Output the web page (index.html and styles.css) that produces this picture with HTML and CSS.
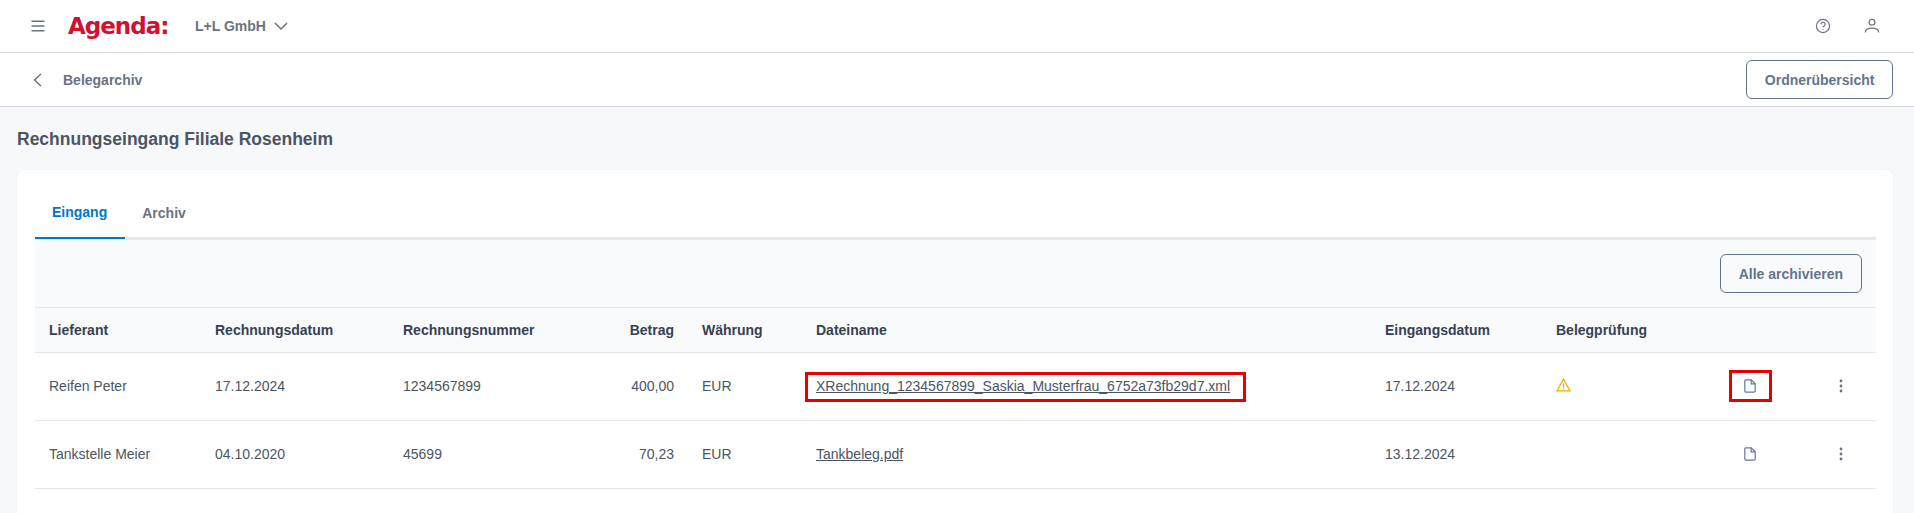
FILE: index.html
```html
<!DOCTYPE html>
<html lang="de">
<head>
<meta charset="utf-8">
<title>Belegarchiv</title>
<link rel="stylesheet" href="styles.css">
</head>
<body>
<header class="topbar">
  <div class="topbar-left">
    <svg class="icon menu" viewBox="0 0 16 16" width="16" height="16"><path d="M1.5 3.2h13M1.5 8h13M1.5 12.8h13"/></svg>
    <span class="logo">Agenda:</span>
    <span class="company">L+L GmbH</span>
    <svg class="icon chevron" viewBox="0 0 14 8" width="14" height="8"><path d="M1 1l6 6 6-6"/></svg>
  </div>
  <div class="topbar-right">
    <svg class="icon" viewBox="0 0 16 16" width="16" height="16"><circle cx="8" cy="8" r="6.6"/><path d="M5.9 6.3a2.1 2 0 1 1 3.2 1.7c-.7.4-1.1.8-1.1 1.6"/><path d="M8 11.2v.9"/></svg>
    <svg class="icon" viewBox="0 0 16 16" width="16" height="16"><circle cx="8" cy="4.3" r="2.9"/><path d="M1.2 14.5c.3-3 3-4.4 6.8-4.4s6.5 1.4 6.8 4.4"/></svg>
  </div>
</header>
<nav class="subbar">
  <div class="subbar-left">
    <svg class="icon back" viewBox="0 0 9 14" width="9" height="14"><path d="M8 1L1.5 7 8 13"/></svg>
    <span class="subbar-title">Belegarchiv</span>
  </div>
  <button class="btn">Ordnerübersicht</button>
</nav>
<main class="content">
  <h1 class="page-title">Rechnungseingang Filiale Rosenheim</h1>
  <section class="card">
    <div class="tabs">
      <span class="tab active">Eingang</span>
      <span class="tab">Archiv</span>
    </div>
    <div class="toolbar"><button class="btn btn-archive">Alle archivieren</button></div>
    <table class="grid">
      <colgroup>
        <col class="c1"><col class="c2"><col class="c3"><col class="c4"><col class="c5"><col class="c6"><col class="c7"><col class="c8"><col class="c9"><col class="c10">
      </colgroup>
      <thead>
        <tr>
          <th>Lieferant</th><th>Rechnungsdatum</th><th>Rechnungsnummer</th><th class="num">Betrag</th><th>Währung</th><th>Dateiname</th><th>Eingangsdatum</th><th>Belegprüfung</th><th></th><th></th>
        </tr>
      </thead>
      <tbody>
        <tr>
          <td>Reifen Peter</td><td>17.12.2024</td><td>1234567899</td><td class="num">400,00</td><td>EUR</td>
          <td class="marked"><a class="file" href="#">XRechnung_1234567899_Saskia_Musterfrau_6752a73fb29d7.xml</a><span class="mark mark-file"></span></td>
          <td>17.12.2024</td>
          <td><svg class="warn" viewBox="0 0 16 15" width="15" height="14"><path d="M8 1.2L1 13.8h14z"/><path d="M8 5.6v4.6M8 11.2v1.2"/></svg></td>
          <td class="center marked"><svg class="icon doc" viewBox="0 0 12 14" width="12" height="14"><path d="M1.8.8h5.4l4 4v7a1.4 1.4 0 0 1-1.4 1.4H1.8A1.4 1.4 0 0 1 .8 11.8V2a1.2 1.2 0 0 1 1-1.2z"/><path d="M7.2.8v4h4"/></svg><span class="mark mark-doc"></span></td>
          <td class="center"><svg class="dots" viewBox="0 0 4 14" width="4" height="14"><circle cx="2" cy="2" r="1.4"/><circle cx="2" cy="7" r="1.4"/><circle cx="2" cy="12" r="1.4"/></svg></td>
        </tr>
        <tr>
          <td>Tankstelle Meier</td><td>04.10.2020</td><td>45699</td><td class="num">70,23</td><td>EUR</td>
          <td><a class="file" href="#">Tankbeleg.pdf</a></td>
          <td>13.12.2024</td>
          <td></td>
          <td class="center"><svg class="icon doc" viewBox="0 0 12 14" width="12" height="14"><path d="M1.8.8h5.4l4 4v7a1.4 1.4 0 0 1-1.4 1.4H1.8A1.4 1.4 0 0 1 .8 11.8V2a1.2 1.2 0 0 1 1-1.2z"/><path d="M7.2.8v4h4"/></svg></td>
          <td class="center"><svg class="dots" viewBox="0 0 4 14" width="4" height="14"><circle cx="2" cy="2" r="1.4"/><circle cx="2" cy="7" r="1.4"/><circle cx="2" cy="12" r="1.4"/></svg></td>
        </tr>
      </tbody>
    </table>
  </section>
</main>
</body>
</html>
```
FILE: styles.css
```css
* { box-sizing: border-box; }
html, body { height: 100%; }
body {
  margin: 0;
  overflow: hidden;
  display: flex;
  flex-direction: column;
  background: #f7f8fa;
  color: #4b5563;
  font-family: "Liberation Sans", Arial, sans-serif;
  font-size: 14px;
}
.icon { fill: none; stroke: #6b7280; stroke-width: 1.2; display: block; }
.topbar {
  flex: none;
  height: 53px;
  background: #fff;
  border-bottom: 1px solid #d1d5db;
  display: flex;
  align-items: center;
  justify-content: space-between;
  padding: 0 34px 0 30px;
}
.topbar-left { display: flex; align-items: center; }
.topbar-right { display: flex; align-items: center; gap: 33px; }
.menu { margin-right: 22px; stroke-width: 1.5; }
.logo {
  width: 127px;
  color: #d3102f;
  font-family: "DejaVu Sans", sans-serif;
  font-size: 23px;
  font-weight: 700;
  line-height: 30px;
  letter-spacing: -1px;
}
.company { font-weight: 700; color: #6b7280; margin-right: 8px; }
.chevron { stroke-width: 1.5; }
.subbar {
  flex: none;
  height: 54px;
  background: #fff;
  border-bottom: 1px solid #d1d5db;
  display: flex;
  align-items: center;
  justify-content: space-between;
  padding: 0 21px 0 33px;
}
.subbar-left { display: flex; align-items: center; gap: 21px; }
.back { stroke-width: 1.5; }
.subbar-title { font-weight: 700; color: #6b7280; }
.btn {
  height: 39px;
  padding: 0 17.5px;
  background: transparent;
  border: 1px solid #64748b;
  border-radius: 6px;
  color: #64748b;
  font: 700 14px "Liberation Sans", Arial, sans-serif;
}
.btn-archive { padding: 0 18px; }
.content {
  flex: 1;
  min-height: 0;
  display: flex;
  flex-direction: column;
  padding: 0 21px 0 17px;
}
.page-title {
  flex: none;
  margin: 0;
  height: 63px;
  padding-top: 21px;
  font-size: 17.5px;
  line-height: 22px;
  font-weight: 700;
  color: #4b5563;
}
.card {
  flex: 1;
  background: #fff;
  border-radius: 8px 8px 0 0;
  padding: 0 17px 0 18px;
  box-shadow: 0 0 2px rgba(17, 24, 39, 0.06);
}
.tabs {
  height: 70px;
  display: flex;
  align-items: flex-end;
  border-bottom: 3px solid #e5e7eb;
}
.tab {
  height: 70px;
  margin-bottom: -3px;
  padding: 33px 18px 0 17px;
  font-weight: 700;
  line-height: 20px;
  color: #6b7280;
}
.tab.active { color: #0077c8; border-bottom: 2px solid #0077c8; height: 69px; margin-bottom: -2px; padding-top: 32px; }
.toolbar {
  height: 68px;
  background: #f9fafb;
  border-bottom: 1px solid #e5e7eb;
  display: flex;
  align-items: center;
  justify-content: flex-end;
  padding: 0 14px 0 0;
}
.grid { width: 100%; table-layout: fixed; border-collapse: collapse; }
.c1 { width: 166px; }
.c2 { width: 188px; }
.c3 { width: 199px; }
.c4 { width: 100px; }
.c5 { width: 114px; }
.c6 { width: 569px; }
.c7 { width: 171px; }
.c8 { width: 152px; }
.c9 { width: 112px; }
.c10 { width: 70px; }
th {
  height: 44px;
  background: #f9fafb;
  padding: 0 14px;
  text-align: left;
  font-weight: 700;
  color: #374151;
  border-bottom: 1px solid #e5e7eb;
}
td {
  height: 68px;
  padding: 0 14px;
  color: #4b5563;
  border-bottom: 1px solid #e5e7eb;
}
.num { text-align: right; }
.center { text-align: center; }
.center svg { display: inline-block; vertical-align: middle; margin-top: -3px; }
.file { color: #4b5563; }
.marked { position: relative; }
.mark { position: absolute; border: 3px solid #e60000; }
.mark-file { left: 3px; top: 19px; width: 441px; height: 30px; }
.mark-doc { left: 35px; top: 17px; width: 43px; height: 32px; }
.warn { fill: none; stroke: #f5b000; stroke-width: 1.3; display: block; margin-top: -2px; }
.doc { stroke: #64789b; }
.dots { fill: #6b7280; }
```
